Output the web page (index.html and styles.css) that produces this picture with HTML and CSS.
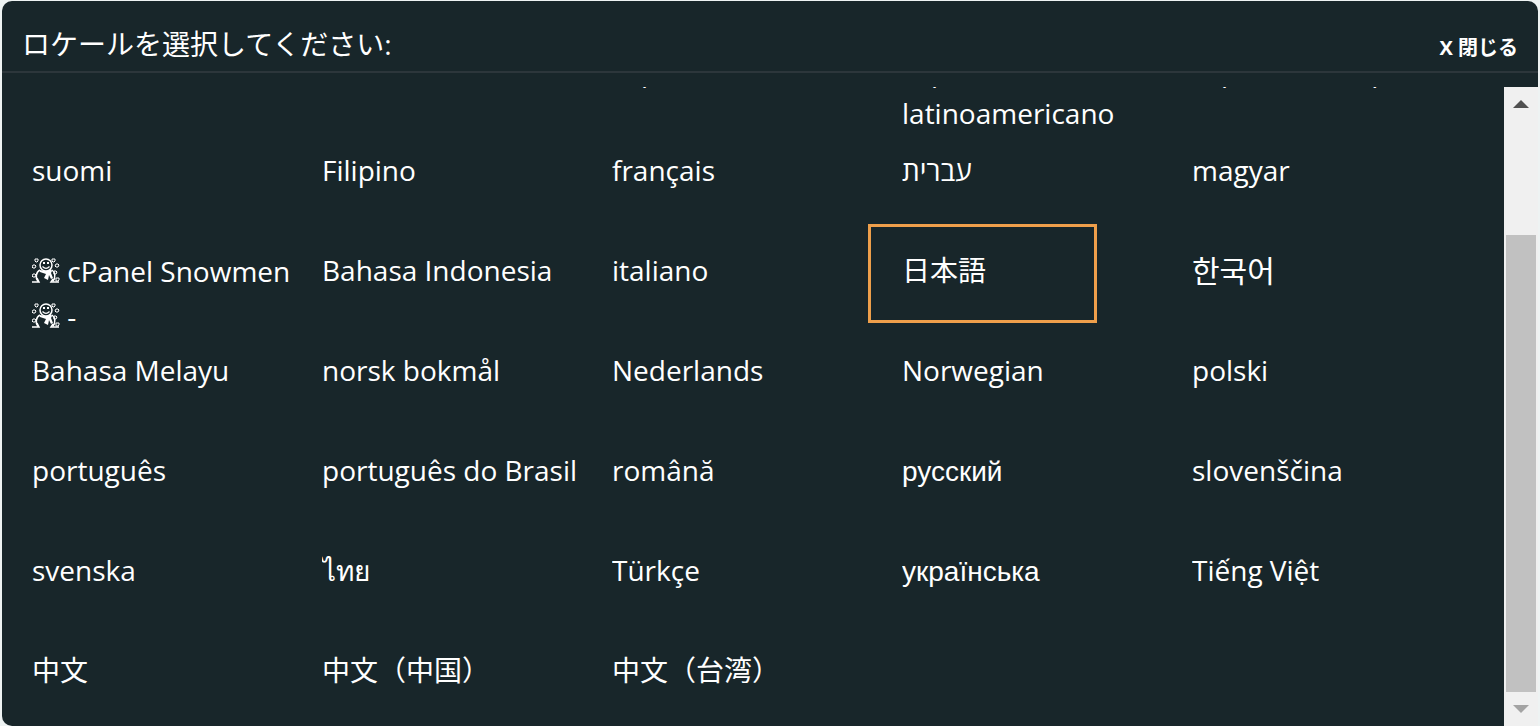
FILE: index.html
```html
<!DOCTYPE html>
<html lang="ja">
<head>
<meta charset="utf-8">
<title>ロケールを選択してください</title>
<link rel="stylesheet" href="styles.css">
</head>
<body>
<svg class="defs" width="0" height="0" aria-hidden="true">
  <symbol id="snowman" viewBox="0 0 28 25">
    <g fill="none" stroke="currentColor" stroke-width="1">
      <path d="M3 1h3v2l-1 1H4L3 3zM20 1h3v2l-1 1h-1l-1-1zM1 7h2l1 1-1 2H1L0 9zM24 6h2l1 1-1 2h-2l-1-1zM1 16h2l1 1-1 2H1l-1-1zM22 13h2l1 1-1 2h-2zM24 20h3v2l-1 1h-2z"/>
      <circle cx="14" cy="7" r="6" stroke-width="1.5"/>
      <path d="M8 12C4 14 3 20 6 23M20 12c3 2 4 8 1 11M0 24h7l-2-4M27 24h-8l2-3" stroke-width="1.5"/>
      <path d="M10.500 8.500q3.500 3.500 7 0" stroke-width="1.200"/>
    </g>
    <path fill="currentColor" d="M11 4h2v2h-2zM15 4h2v2h-2zM8 12l6 1 5-2 1 2-1 2 2 5-2 1-2-4-1 5-4-2 2-4-6-2z"/>
  </symbol>
</svg>
<main class="modal">
  <header class="modal-header">
    <h1 class="title">ロケールを選択してください:</h1>
    <button class="close" type="button">X 閉じる</button>
  </header>
  <div class="scroller">
    <nav class="viewport">
      <ul class="locales">
        <li class="third"><a href="#">español</a></li>
        <li><a href="#">español latinoamericano</a></li>
        <li><a href="#">español de España</a></li>
        <li><a href="#">suomi</a></li>
        <li><a href="#">Filipino</a></li>
        <li><a href="#">français</a></li>
        <li><a href="#" lang="he">עברית</a></li>
        <li><a href="#">magyar</a></li>
        <li><a href="#" class="snow"><svg class="snowman" role="img" aria-label="☃"><use href="#snowman"/></svg> cPanel Snowmen <svg class="snowman" role="img" aria-label="☃"><use href="#snowman"/></svg> -</a></li>
        <li><a href="#">Bahasa Indonesia</a></li>
        <li><a href="#">italiano</a></li>
        <li class="marked"><a href="#" lang="ja">日本語</a></li>
        <li><a href="#" lang="ko" class="korean">한국어</a></li>
        <li><a href="#">Bahasa Melayu</a></li>
        <li><a href="#">norsk bokmål</a></li>
        <li><a href="#">Nederlands</a></li>
        <li><a href="#">Norwegian</a></li>
        <li><a href="#">polski</a></li>
        <li><a href="#">português</a></li>
        <li><a href="#">português do Brasil</a></li>
        <li><a href="#">română</a></li>
        <li><a href="#" lang="ru" class="arial">русский</a></li>
        <li><a href="#">slovenščina</a></li>
        <li><a href="#">svenska</a></li>
        <li><a href="#" lang="th">ไทย</a></li>
        <li><a href="#">Türkçe</a></li>
        <li><a href="#" lang="uk" class="arial">українська</a></li>
        <li><a href="#">Tiếng Việt</a></li>
        <li><a href="#" lang="ja">中文</a></li>
        <li><a href="#" lang="ja">中文（中国）</a></li>
        <li><a href="#" lang="ja">中文（台湾）</a></li>
      </ul>
    </nav>
    <div class="scrollbar">
      <button class="arrow" type="button" aria-label="Scroll up"><svg width="16" height="8"><path d="M8 0l8 8H0z" fill="#505050"/></svg></button>
      <div class="track"><div class="thumb"></div></div>
      <button class="arrow" type="button" aria-label="Scroll down"><svg width="16" height="8"><path d="M0 0h16L8 8z" fill="#a3a3a3"/></svg></button>
    </div>
  </div>
</main>
</body>
</html>
```
FILE: styles.css
```css
*, *::after { box-sizing: border-box; }

body {
  margin: 0;
  padding: 1px 2px 0;
  height: 100vh;
  overflow: hidden;
  background: #eef3f3;
  color: #fff;
  font-family: "Open Sans", "Noto Sans CJK JP", sans-serif;
}

.defs { position: absolute; }

.modal {
  display: flex;
  flex-direction: column;
  height: 100%;
  border-radius: 10px 10px 0 10px;
  background: #18262a;
  overflow: hidden;
}

.modal-header {
  display: flex;
  align-items: baseline;
  justify-content: space-between;
  height: 72px;
  padding: 22px 20px 0;
  border-bottom: 2px solid #2c363b;
  flex: none;
}

.title {
  margin: 0;
  font-size: 28px;
  font-weight: 400;
  line-height: 42px;
}

.close {
  padding: 0;
  border: 0;
  background: none;
  color: inherit;
  font: 700 20px/30px "Open Sans", "Noto Sans CJK JP", sans-serif;
}

.scroller {
  display: flex;
  flex: 1;
  min-height: 0;
  margin-top: 14px;
}

.viewport {
  flex: 1;
  overflow: hidden;
}

/* List scrolled past its first rows */
.locales {
  display: grid;
  grid-template-columns: repeat(auto-fill, 290px);
  grid-auto-rows: 80px;
  row-gap: 20px;
  margin: -38px 0 0;
  padding: 0 0 0 30px;
  list-style: none;
}

.locales li { position: relative; }

.locales .third { grid-column-start: 3; }

.locales a {
  display: block;
  width: 270px;
  height: 80px;
  overflow: hidden;
  color: inherit;
  text-decoration: none;
  font-size: 28px;
  line-height: 43px;
}

.locales .arial {
  font-family: "Liberation Sans", sans-serif;
  line-height: 45px;
}

.locales .korean {
  font-family: "Open Sans", "Noto Sans CJK KR", sans-serif;
  font-size: 30px;
}

.locales .snow { line-height: 45px; }

.snowman {
  width: 28px;
  height: 25px;
  vertical-align: -1px;
}

.marked::after {
  content: "";
  position: absolute;
  top: -25px;
  left: -34px;
  width: 229px;
  height: 99px;
  border: 3px solid #ee9f4b;
  pointer-events: none;
}

.scrollbar {
  display: flex;
  flex-direction: column;
  width: 34px;
  background: #f0f0f0;
}

.arrow {
  display: grid;
  place-items: center;
  height: 34px;
  padding: 0;
  border: 0;
  background: none;
}

.track {
  display: flex;
  flex-direction: column;
  justify-content: flex-end;
  flex: 1;
  padding: 0 2px;
}

.thumb {
  height: 80%;
  background: #c1c1c1;
}
```
